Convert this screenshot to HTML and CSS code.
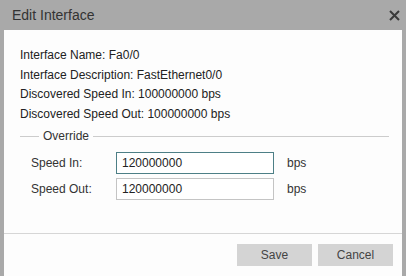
FILE: index.html
```html
<!DOCTYPE html>
<html lang="en">
<head>
  <meta charset="UTF-8" />
  <title>Edit Interface</title>
  <link rel="stylesheet" href="styles.css">
</head>
<body>
  <div class="dialog">
    <div class="titlebar">
      <span class="title">Edit Interface</span>
      <svg class="close" width="11" height="11" viewBox="0 0 11 11">
        <path d="M1 1 L10 10 M10 1 L1 10" stroke="#3a3a3a" stroke-width="2" />
      </svg>
    </div>

    <div class="content">
      <p class="info">Interface Name: Fa0/0</p>
      <p class="info">Interface Description: FastEthernet0/0</p>
      <p class="info">Discovered Speed In: 100000000 bps</p>
      <p class="info">Discovered Speed Out: 100000000 bps</p>

      <fieldset class="override">
        <legend>Override</legend>
        <div class="row">
          <label for="speedIn">Speed In:</label>
          <input type="text" id="speedIn" class="focused" value="120000000">
          <span class="unit">bps</span>
        </div>
        <div class="row">
          <label for="speedOut">Speed Out:</label>
          <input type="text" id="speedOut" value="120000000">
          <span class="unit">bps</span>
        </div>
      </fieldset>
    </div>

    <div class="footer">
      <button>Save</button>
      <button>Cancel</button>
    </div>
  </div>
</body>
</html>
```

FILE: styles.css
```css
html, body {
  margin: 0;
  height: 100%;
}

body {
  background: #a9a9a9;
  font-family: "Liberation Sans", Arial, sans-serif;
  color: #333;
}

.dialog {
  display: flex;
  flex-direction: column;
  height: 100%;
}

.titlebar {
  height: 30px;
  display: flex;
  align-items: center;
  justify-content: space-between;
  padding: 0 6px 0 12px;
}

.title {
  font-size: 14px;
  color: #333;
}

.close {
  display: block;
}

.content {
  background: #fdfdfd;
  margin: 0 4px;
  padding: 16px 13px 0 16px;
  height: 203px;
  box-sizing: border-box;
}

.info {
  margin: 0;
  font-size: 12px;
  line-height: 19.5px;
  color: #222;
}

.override {
  margin: 5px 0 0 0;
  padding: 9px 0 0 11px;
  border: none;
  border-top: 1px solid #ccc;
}

.override legend {
  font-size: 12px;
  padding: 0 4px;
  margin-left: 8px;
  color: #333;
}

.row {
  display: flex;
  align-items: baseline;
  margin-bottom: 4px;
  font-size: 12px;
}

.row label {
  width: 85px;
}

.row input {
  width: 158px;
  height: 22px;
  box-sizing: border-box;
  border: 1px solid #c4c4c4;
  padding: 0 5px;
  font-family: "Liberation Sans", Arial, sans-serif;
  font-size: 12px;
  color: #222;
  background: #fff;
  outline: none;
}

.row input.focused {
  border-color: #4d7f86;
}

.unit {
  margin-left: 13px;
}

.footer {
  flex: 1;
  background: #fdfdfd;
  margin: 0 4px;
  border-top: 1px solid #d6d6d6;
  display: flex;
  justify-content: flex-end;
  align-items: flex-start;
  gap: 6px;
  padding: 10px 9px 0 0;
}

.footer button {
  width: 75px;
  height: 22px;
  border: none;
  background: #d4d4d4;
  font-family: "Liberation Sans", Arial, sans-serif;
  font-size: 12px;
  color: #444;
}
```
